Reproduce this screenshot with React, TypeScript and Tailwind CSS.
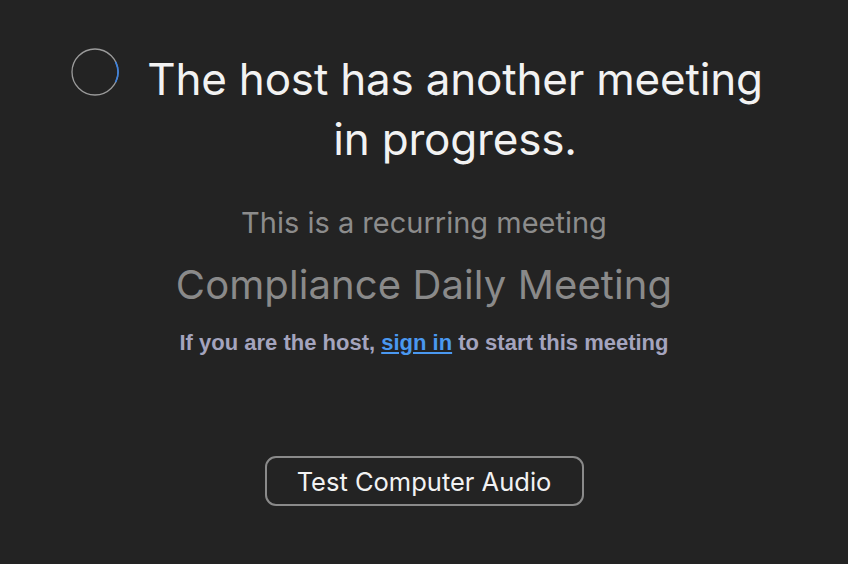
import React from 'react';

const Spinner = () => (
    <svg width="48" height="48" viewBox="0 0 48 48" className="shrink-0">
        <circle cx="24" cy="24" r="23" fill="none" stroke="#9b9b9b" strokeWidth="1.3" />
        <path d="M44.6 13.8 A23 23 0 0 1 44.6 34.2" fill="none" stroke="#3b82e0" strokeWidth="1.6" />
    </svg>
);

const App = () => {
    return (
        <main
            className="w-[848px] h-[564px] bg-[#232323] flex flex-col items-center overflow-hidden"
            style={{ fontFamily: 'Inter, "Noto Sans", sans-serif' }}
        >
            <div className="flex items-start gap-[14px] mt-[48px]">
                <Spinner />
                <h1 className="w-[644px] mt-[1px] text-center text-[44px] leading-[60px] font-normal text-[#f2f2f2] tracking-[-0.2px]">
                    The host has another meeting
                    <br />
                    in progress.
                </h1>
            </div>
            <p className="mt-[36px] text-[29px] leading-[36px] text-[#8c8c8c]">This is a recurring meeting</p>
            <p className="mt-[20px] text-[40px] leading-[48px] text-[#8a8a8a] tracking-[0.1px]">Compliance Daily Meeting</p>
            <p
                className="mt-[20px] text-[22px] leading-[28px] font-bold text-[#a4a4be]"
                style={{ fontFamily: '"Liberation Sans", Arial, sans-serif' }}
            >
                If you are the host,{' '}
                <a href="#" className="text-[#4a98f0] underline underline-offset-2">
                    sign in
                </a>{' '}
                to start this meeting
            </p>
            <button className="mt-[99px] w-[319px] h-[50px] pt-[3px] rounded-[11px] border-2 border-[#8a8a8a] text-[25.5px] text-[#f2f2f2] bg-transparent">
                Test Computer Audio
            </button>
        </main>
    );
};

export default App;
